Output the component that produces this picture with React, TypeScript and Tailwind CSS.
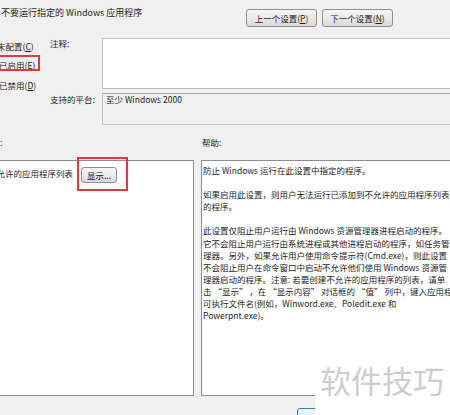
import React from "react";

const font = { fontFamily: '"Noto Sans CJK SC", "Noto Sans", sans-serif' };

function WinButton({ children, className = "" }: { children: React.ReactNode; className?: string }) {
  return (
    <div
      className={`flex shrink-0 items-center justify-center rounded-[3px] border border-[#8f8f8f] bg-linear-to-b from-[#f6f6f6] via-[#e9e9e9] to-[#d9d9d9] text-[8.5px] leading-none text-[#222] ${className}`}
    >
      {children}
    </div>
  );
}

const helpLines: (string | null)[] = [
  "防止 Windows 运行在此设置中指定的程序。",
  null,
  "如果启用此设置，则用户无法运行已添加到不允许的应用程序列表中",
  "的程序。",
  null,
  "此设置仅阻止用户运行由 Windows 资源管理器进程启动的程序。",
  "它不会阻止用户运行由系统进程或其他进程启动的程序，如任务管",
  "理器。另外，如果允许用户使用命令提示符(Cmd.exe)，则此设置",
  "不会阻止用户在命令窗口中启动不允许他们使用 Windows 资源管",
  "理器启动的程序。注意: 若要创建不允许的应用程序的列表，请单",
  "击 “显示” ，在 “显示内容” 对话框的 “值” 列中，键入应用程序",
  "可执行文件名(例如，Winword.exe、Poledit.exe 和",
  "Powerpnt.exe)。",
];

export default function App() {
  return (
    <div className="relative h-[415px] w-[450px] overflow-hidden bg-[#f0f0f0] text-[#1e1e1e]" style={font}>
      {/* header */}
      <div className="flex h-[38px] items-start">
        <div className="ml-[1px] whitespace-nowrap pt-[6px] text-[9px] leading-[13px]">不要运行指定的 Windows 应用程序</div>
        <div className="ml-auto mr-[57px] mt-[9px] flex shrink-0 gap-[5px]">
          <WinButton className="h-[18px] w-[71px]">上一个设置(<span className="underline">P</span>)</WinButton>
          <WinButton className="h-[18px] w-[71px]">下一个设置(<span className="underline">N</span>)</WinButton>
        </div>
      </div>

      {/* settings */}
      <div className="flex h-[87px]">
        <div className="flex w-[50px] shrink-0 flex-col gap-[7.5px] pt-[1.5px] text-[8.5px] leading-[12px]">
          <div className="ml-[-3px] whitespace-nowrap">未配置(<span className="underline">C</span>)</div>
          <div className="relative ml-[-1px] whitespace-nowrap">
            已启用(<span className="underline">E</span>)
            <div className="absolute left-[-12px] top-[-4px] h-[15.5px] w-[53px] border-2 border-[#dd3b3f]" />
          </div>
          <div className="ml-[-1px] whitespace-nowrap">已禁用(<span className="underline">D</span>)</div>
        </div>
        <div className="flex w-[52px] shrink-0 flex-col text-[8.5px]">
          <div className="h-[55px] leading-[10px]">注释:</div>
          <div className="whitespace-nowrap leading-[12px]">支持的平台:</div>
        </div>
        <div className="flex w-[360px] shrink-0 flex-col">
          <div className="h-[51px] w-[360px] border border-[#b9bcc2] bg-white" />
          <div className="mt-[4px] h-[32px] w-[360px] border border-[#c6c6c6] border-t-[#a9a9a9] bg-[#f0f0f0] pl-[3px] text-[8.5px] leading-[11px]">
            至少 Windows 2000
          </div>
        </div>
      </div>

      {/* labels */}
      <div className="flex h-[35px] pt-[11px] text-[8.5px] leading-[12px]">
        <div className="ml-[-17px] w-[219px] shrink-0 whitespace-nowrap">选项:</div>
        <div className="whitespace-nowrap">帮助:</div>
      </div>

      {/* panels */}
      <div className="flex h-[236px]">
        <div className="ml-[-20px] h-full w-[214px] shrink-0 border border-[#8a8d94] bg-white pl-[7px] pt-[6px]">
          <div className="flex items-start text-[8.5px] leading-[12px]">
            <span className="whitespace-nowrap">不允许的应用程序列表</span>
            <div className="relative ml-[8px]">
              <WinButton className="h-[16px] w-[36px]">显示...</WinButton>
              <div className="absolute left-[-4px] top-[-10px] h-[34px] w-[51px] border-2 border-[#dd3b3f]" />
            </div>
          </div>
        </div>
        <div className="ml-[7px] h-full w-[260px] shrink-0 overflow-hidden border border-[#8a8d94] bg-white pl-[1px] pt-[3px] text-[8.5px] leading-[12.1px]">
          {helpLines.map((l, i) =>
            l === null ? (
              <div key={i} className="h-[12.1px]" />
            ) : (
              <div key={i} className="whitespace-nowrap">
                {l}
              </div>
            )
          )}
        </div>
      </div>

      {/* bottom strip */}
      <div className="h-[19px] pl-[297px] pt-[12px]">
        <div className="h-[22px] w-[75px] rounded-[3px] border border-[#3c7fb1] bg-linear-to-b from-[#eaf6fd] to-[#d9f0fc]" />
      </div>

      {/* watermark */}
      <div className="absolute left-[315px] top-[356px] h-[59px] w-[135px] bg-white pl-[5px] pt-[8px]">
        <div className="whitespace-nowrap text-[31px] leading-[31px] text-[#cdcdcd]">软件技巧</div>
      </div>
    </div>
  );
}
